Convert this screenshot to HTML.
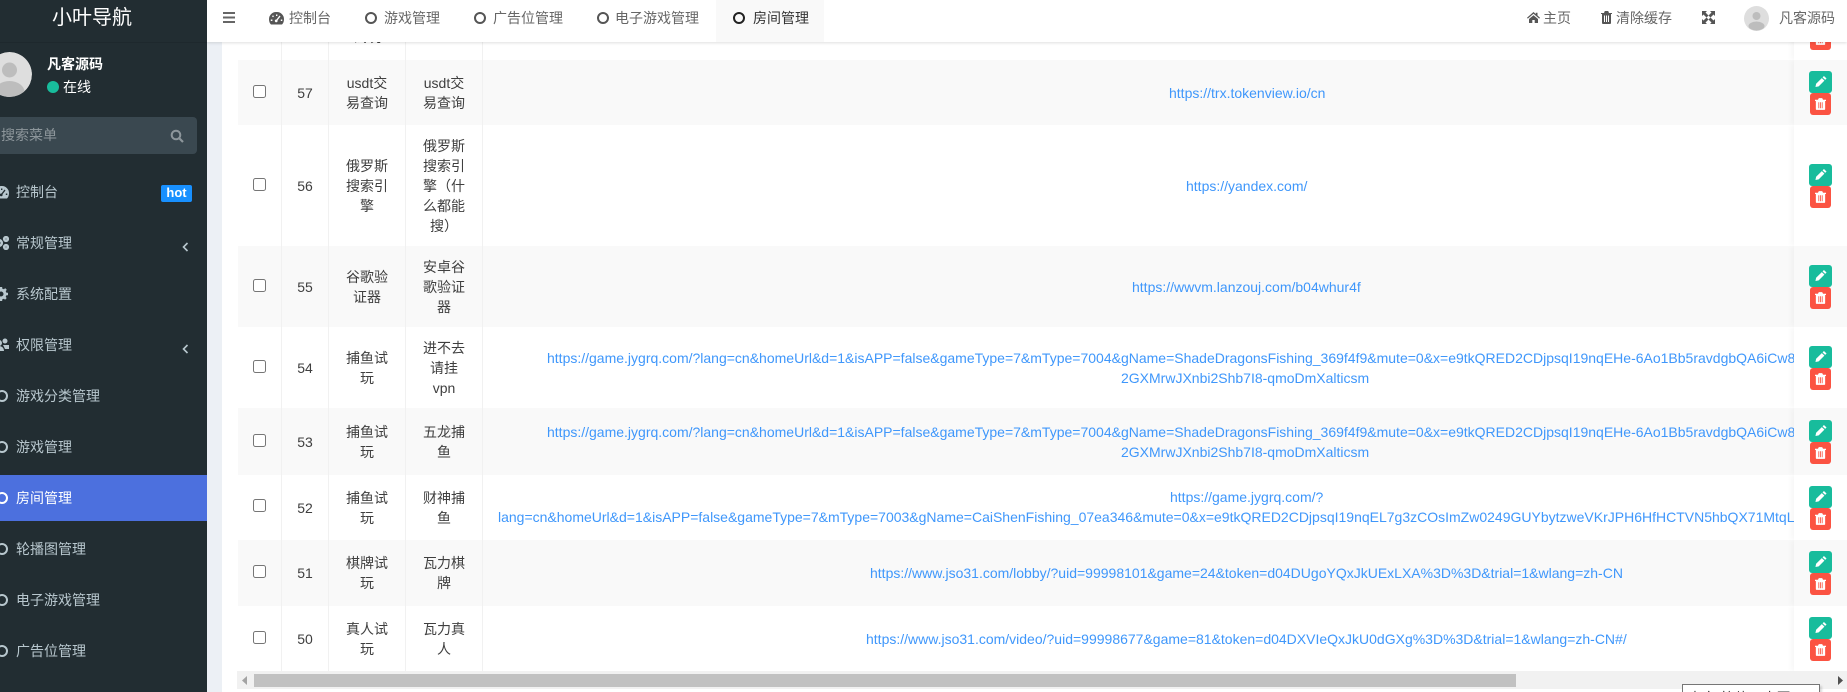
<!DOCTYPE html>
<html lang="zh-CN"><head><meta charset="utf-8"><title>房间管理</title>
<style>
*{box-sizing:border-box}
html,body{margin:0;padding:0;width:1847px;height:692px;overflow:hidden;background:#fff}
body{position:relative;font:14px/20px "Liberation Sans","Noto Sans CJK SC",sans-serif;color:#444}
.abs,.side,.side *,.hd,.hd *{position:absolute}
.side{left:0;top:0;width:207px;height:692px;background:#222d32;overflow:hidden;z-index:5;color:#b8c7ce}
.t{white-space:nowrap;line-height:20px}
.m{left:16px}
.ring{width:12px;height:12px;border:2.4px solid #b8c7ce;border-radius:50%;left:-4px}
.gut{position:absolute;left:207px;top:0;width:15px;height:692px;background:#ecf0f5}
.hd{left:207px;top:0;width:1640px;height:42px;background:#fff;box-shadow:0 1px 3px rgba(0,0,0,.13);z-index:4;color:#666}
.hr{width:12px;height:12px;border:2.4px solid #555;border-radius:50%;top:11.5px}
.row{position:absolute;left:238px;width:1609px;border-bottom:1px solid #f1f1f1;background:#fff;overflow:hidden}
.s{background:#f9f9f9}
.c{position:absolute;top:0;bottom:0;display:flex;align-items:center;justify-content:center;text-align:center;border-right:1px solid #f1f1f1;color:#3f3f3f}
.c1{left:0;width:44px}.c2{left:44px;width:47px}.c3{left:91px;width:77px}.c4{left:168px;width:77px}
.c1 input{position:absolute;left:15px;margin:0;width:13px;height:13px}
.u{position:absolute;left:244px;width:1312px;top:0;bottom:0;overflow:hidden;display:flex;align-items:center;color:#3f97fb}
.u div{position:absolute;white-space:nowrap}
.b{position:absolute;left:1556px;width:53px;top:0;bottom:0;box-shadow:-3px 0 5px rgba(0,0,0,.035);display:flex;flex-direction:column;justify-content:center}
.g,.r{height:22px;border-radius:3px;position:relative;flex:none}
.g{width:23px;margin-left:15px;background:#18bc9c}
.r{width:21px;margin-left:16px;background:#fb5342}
.g svg{position:absolute;left:6px;top:4px;width:12px;height:13px}
.r svg{position:absolute;left:5px;top:5px;width:11px;height:12px}
</style></head><body>
<div class="gut"></div>

<!-- table rows -->
<div class="row" style="top:0;height:61px"><div class="c c1"></div><div class="c c2"></div><div class="c c3"><div style="position:absolute;top:27px;left:0;width:100%">试玩</div></div><div class="c c4"></div><div class="b" style="justify-content:flex-start"><div class="r" style="margin-top:28px"><svg viewBox="0 0 13 14"><path fill="#fff" fill-rule="evenodd" d="M4.500 0h4l1 2H13v1.400h-1V13a1 1 0 0 1-1 1H2a1 1 0 0 1-1-1V3.400H0V2h3.500zM4 5v7h1V5zM6 5v7h1V5zM8 5v7h1V5z"/></svg></div></div></div>

<div class="row s" style="top:60px;height:66px"><div class="c c1"><input type="checkbox" style="top:25px"></div><div class="c c2">57</div><div class="c c3">usdt交<br>易查询</div><div class="c c4">usdt交<br>易查询</div><div class="u"><div style="left:687px">https://trx.tokenview.io/cn</div></div><div class="b"><div class="g"><svg viewBox="0 0 13 14"><path fill="#fff" d="M9.700 1l2.800 2.800-1.500 1.500L8.200 2.500zM7.400 3.300l2.800 2.800L4 12.300 0.500 13l.7-3.500z"/></svg></div><div class="r"><svg viewBox="0 0 13 14"><path fill="#fff" fill-rule="evenodd" d="M4.500 0h4l1 2H13v1.400h-1V13a1 1 0 0 1-1 1H2a1 1 0 0 1-1-1V3.400H0V2h3.500zM4 5v7h1V5zM6 5v7h1V5zM8 5v7h1V5z"/></svg></div></div></div>

<div class="row" style="top:125px;height:122px"><div class="c c1"><input type="checkbox" style="top:53px"></div><div class="c c2">56</div><div class="c c3">俄罗斯<br>搜索引<br>擎</div><div class="c c4">俄罗斯<br>搜索引<br>擎（什<br>么都能<br>搜）</div><div class="u"><div style="left:704px">https://yandex.com/</div></div><div class="b"><div class="g"><svg viewBox="0 0 13 14"><path fill="#fff" d="M9.700 1l2.800 2.800-1.500 1.500L8.200 2.500zM7.400 3.300l2.800 2.800L4 12.300 0.500 13l.7-3.500z"/></svg></div><div class="r"><svg viewBox="0 0 13 14"><path fill="#fff" fill-rule="evenodd" d="M4.500 0h4l1 2H13v1.400h-1V13a1 1 0 0 1-1 1H2a1 1 0 0 1-1-1V3.400H0V2h3.500zM4 5v7h1V5zM6 5v7h1V5zM8 5v7h1V5z"/></svg></div></div></div>

<div class="row s" style="top:246px;height:82px"><div class="c c1"><input type="checkbox" style="top:33px"></div><div class="c c2">55</div><div class="c c3">谷歌验<br>证器</div><div class="c c4">安卓谷<br>歌验证<br>器</div><div class="u"><div style="left:650px">https://wwvm.lanzouj.com/b04whur4f</div></div><div class="b"><div class="g"><svg viewBox="0 0 13 14"><path fill="#fff" d="M9.700 1l2.800 2.800-1.500 1.500L8.200 2.500zM7.400 3.300l2.800 2.800L4 12.300 0.500 13l.7-3.500z"/></svg></div><div class="r"><svg viewBox="0 0 13 14"><path fill="#fff" fill-rule="evenodd" d="M4.500 0h4l1 2H13v1.400h-1V13a1 1 0 0 1-1 1H2a1 1 0 0 1-1-1V3.400H0V2h3.500zM4 5v7h1V5zM6 5v7h1V5zM8 5v7h1V5z"/></svg></div></div></div>

<div class="row" style="top:327px;height:82px"><div class="c c1"><input type="checkbox" style="top:33px"></div><div class="c c2">54</div><div class="c c3">捕鱼试<br>玩</div><div class="c c4">进不去<br>请挂<br>vpn</div><div class="u"><div style="left:65px;top:21px">https://game.jygrq.com/?lang=cn&amp;homeUrl&amp;d=1&amp;isAPP=false&amp;gameType=7&amp;mType=7004&amp;gName=ShadeDragonsFishing_369f4f9&amp;mute=0&amp;x=e9tkQRED2CDjpsqI19nqEHe-6Ao1Bb5ravdgbQA6iCw8kT1xYqPz0Lm3Rt7bVn</div><div style="left:639px;top:41px">2GXMrwJXnbi2Shb7I8-qmoDmXalticsm</div></div><div class="b"><div class="g"><svg viewBox="0 0 13 14"><path fill="#fff" d="M9.700 1l2.800 2.800-1.500 1.500L8.200 2.500zM7.400 3.300l2.800 2.800L4 12.300 0.500 13l.7-3.500z"/></svg></div><div class="r"><svg viewBox="0 0 13 14"><path fill="#fff" fill-rule="evenodd" d="M4.500 0h4l1 2H13v1.400h-1V13a1 1 0 0 1-1 1H2a1 1 0 0 1-1-1V3.400H0V2h3.500zM4 5v7h1V5zM6 5v7h1V5zM8 5v7h1V5z"/></svg></div></div></div>

<div class="row s" style="top:408px;height:68px"><div class="c c1"><input type="checkbox" style="top:26px"></div><div class="c c2">53</div><div class="c c3">捕鱼试<br>玩</div><div class="c c4">五龙捕<br>鱼</div><div class="u"><div style="left:65px;top:14px">https://game.jygrq.com/?lang=cn&amp;homeUrl&amp;d=1&amp;isAPP=false&amp;gameType=7&amp;mType=7004&amp;gName=ShadeDragonsFishing_369f4f9&amp;mute=0&amp;x=e9tkQRED2CDjpsqI19nqEHe-6Ao1Bb5ravdgbQA6iCw8kT1xYqPz0Lm3Rt7bVn</div><div style="left:639px;top:34px">2GXMrwJXnbi2Shb7I8-qmoDmXalticsm</div></div><div class="b"><div class="g"><svg viewBox="0 0 13 14"><path fill="#fff" d="M9.700 1l2.800 2.800-1.500 1.500L8.200 2.500zM7.400 3.300l2.800 2.800L4 12.300 0.500 13l.7-3.500z"/></svg></div><div class="r"><svg viewBox="0 0 13 14"><path fill="#fff" fill-rule="evenodd" d="M4.500 0h4l1 2H13v1.400h-1V13a1 1 0 0 1-1 1H2a1 1 0 0 1-1-1V3.400H0V2h3.500zM4 5v7h1V5zM6 5v7h1V5zM8 5v7h1V5z"/></svg></div></div></div>

<div class="row" style="top:475px;height:66px"><div class="c c1"><input type="checkbox" style="top:24px"></div><div class="c c2">52</div><div class="c c3">捕鱼试<br>玩</div><div class="c c4">财神捕<br>鱼</div><div class="u"><div style="left:688px;top:12px">https://game.jygrq.com/?</div><div style="left:16px;top:32px">lang=cn&amp;homeUrl&amp;d=1&amp;isAPP=false&amp;gameType=7&amp;mType=7003&amp;gName=CaiShenFishing_07ea346&amp;mute=0&amp;x=e9tkQRED2CDjpsqI19nqEL7g3zCOsImZw0249GUYbytzweVKrJPH6HfHCTVN5hbQX71MtqLa8Xw2Pq</div></div><div class="b"><div class="g"><svg viewBox="0 0 13 14"><path fill="#fff" d="M9.700 1l2.800 2.800-1.500 1.500L8.200 2.500zM7.400 3.300l2.800 2.800L4 12.300 0.500 13l.7-3.500z"/></svg></div><div class="r"><svg viewBox="0 0 13 14"><path fill="#fff" fill-rule="evenodd" d="M4.500 0h4l1 2H13v1.400h-1V13a1 1 0 0 1-1 1H2a1 1 0 0 1-1-1V3.400H0V2h3.500zM4 5v7h1V5zM6 5v7h1V5zM8 5v7h1V5z"/></svg></div></div></div>

<div class="row s" style="top:540px;height:67px"><div class="c c1"><input type="checkbox" style="top:25px"></div><div class="c c2">51</div><div class="c c3">棋牌试<br>玩</div><div class="c c4">瓦力棋<br>牌</div><div class="u"><div style="left:388px">https://www.jso31.com/lobby/?uid=99998101&amp;game=24&amp;token=d04DUgoYQxJkUExLXA%3D%3D&amp;trial=1&amp;wlang=zh-CN</div></div><div class="b"><div class="g"><svg viewBox="0 0 13 14"><path fill="#fff" d="M9.700 1l2.800 2.800-1.500 1.500L8.200 2.500zM7.400 3.300l2.800 2.800L4 12.300 0.500 13l.7-3.500z"/></svg></div><div class="r"><svg viewBox="0 0 13 14"><path fill="#fff" fill-rule="evenodd" d="M4.500 0h4l1 2H13v1.400h-1V13a1 1 0 0 1-1 1H2a1 1 0 0 1-1-1V3.400H0V2h3.500zM4 5v7h1V5zM6 5v7h1V5zM8 5v7h1V5z"/></svg></div></div></div>

<div class="row" style="top:606px;height:65px;border-bottom:0"><div class="c c1"><input type="checkbox" style="top:25px"></div><div class="c c2">50</div><div class="c c3">真人试<br>玩</div><div class="c c4">瓦力真<br>人</div><div class="u"><div style="left:384px">https://www.jso31.com/video/?uid=99998677&amp;game=81&amp;token=d04DXVIeQxJkU0dGXg%3D%3D&amp;trial=1&amp;wlang=zh-CN#/</div></div><div class="b"><div class="g"><svg viewBox="0 0 13 14"><path fill="#fff" d="M9.700 1l2.800 2.800-1.500 1.500L8.200 2.500zM7.400 3.300l2.800 2.800L4 12.300 0.500 13l.7-3.500z"/></svg></div><div class="r"><svg viewBox="0 0 13 14"><path fill="#fff" fill-rule="evenodd" d="M4.500 0h4l1 2H13v1.400h-1V13a1 1 0 0 1-1 1H2a1 1 0 0 1-1-1V3.400H0V2h3.500zM4 5v7h1V5zM6 5v7h1V5zM8 5v7h1V5z"/></svg></div></div></div>

<!-- scrollbar -->
<div class="abs" style="left:237px;top:671px;width:1610px;height:18px;background:#f1f1f1"></div>
<div class="abs" style="left:254px;top:674px;width:1262px;height:13px;background:#c1c1c1"></div>
<svg class="abs" style="left:241px;top:675px" width="8" height="11"><path d="M6 1v9L1 5.500z" fill="#a3a3a3"/></svg>
<svg class="abs" style="left:1836px;top:675px" width="8" height="11"><path d="M2 1v9l5-4.500z" fill="#505050"/></svg>

<!-- language box -->
<div class="abs" style="left:1682px;top:684px;width:138px;height:30px;background:#fff;border:1px solid #767676;box-shadow:2px 2px 2px rgba(0,0,0,.15);padding:3px 5px;white-space:nowrap;color:#333;overflow:hidden">中文(简体，中国)</div>

<!-- header -->
<div class="hd">
<svg style="left:16px;top:12px" width="12" height="11" viewBox="0 0 12 11"><path fill="#666" d="M0 0h12v2H0zM0 4.500h12v2H0zM0 9h12v2H0z"/></svg>
<svg style="left:62px;top:12px" width="15" height="13" viewBox="0 0 15 13"><path fill="#555" fill-rule="evenodd" d="M7.500 0A7.200 7.200 0 0 0 0 7.200c0 2.100.7 4 2 5.300h11c1.300-1.300 2-3.200 2-5.300A7.200 7.200 0 0 0 7.500 0zM7 2.500h1.400V4H7zM3 4.200l1-1 1 1-1 1zM1.800 7.500h1.600V9H1.800zM11.800 7.500h1.500V9h-1.500zM10.500 3.500l1 1-3 3.800a1.400 1.400 0 1 1-1-.8z"/></svg>
<div class="t" style="left:82px;top:8px">控制台</div>
<div class="hr" style="left:158px"></div><div class="t" style="left:177px;top:8px">游戏管理</div>
<div class="hr" style="left:267px"></div><div class="t" style="left:286px;top:8px">广告位管理</div>
<div class="hr" style="left:390px"></div><div class="t" style="left:408px;top:8px">电子游戏管理</div>
<div style="left:509px;top:0;width:108px;height:42px;background:#f9f9f9"></div>
<div class="hr" style="left:526px;border-color:#222"></div><div class="t" style="left:546px;top:8px;color:#333">房间管理</div>

<svg style="left:1320px;top:12px" width="13" height="11" viewBox="0 0 13 11"><path fill="#555" d="M6.500 0l2.300 2V.8h1.700v2.700L13 5.700l-.8.900-5.700-4.900L.8 6.600 0 5.700zM2 7l4.500-3.800L11 7v4H7.700V8H5.300v3H2z"/></svg>
<div class="t" style="left:1336px;top:8px">主页</div>
<svg style="left:1394px;top:11px" width="11" height="13" viewBox="0 0 11 13"><path fill="#555" fill-rule="evenodd" d="M3.800 0h3.400l.8 2H11v1h-1v9a1 1 0 0 1-1 1H2a1 1 0 0 1-1-1V3H0V2h3zM3 4.500V11h1V4.500zM5 4.500V11h1V4.500zM7 4.500V11h1V4.500z"/></svg>
<div class="t" style="left:1409px;top:8px">清除缓存</div>
<svg style="left:1495px;top:11px" width="13" height="13" viewBox="0 0 13 13"><path fill="#555" d="M0 0h5L3.500 1.500 6.500 4.500 4.500 6.500 1.500 3.500 0 5zM13 0v5l-1.500-1.500-3 3-2-2 3-3L8 0zM0 13V8l1.500 1.500 3-3 2 2-3 3L5 13zM13 13H8l1.500-1.500-3-3 2-2 3 3L13 8z"/></svg>
<svg style="left:1537px;top:6px" width="25" height="25" viewBox="0 0 25 25"><circle cx="12.500" cy="12.500" r="12.500" fill="#dedede"/><circle cx="12.500" cy="10" r="4" fill="#bdbdbd"/><ellipse cx="12.500" cy="20" rx="8" ry="4.500" fill="#bdbdbd"/></svg>
<div class="t" style="left:1572px;top:8px">凡客源码</div>
</div>

<!-- sidebar -->
<div class="side">
<div style="left:0;top:42px;width:207px;height:1px;background:#1e282d"></div>
<div class="t" style="left:52px;top:6px;font-size:20px;line-height:24px;color:#fff">小叶导航</div>
<svg style="left:-13px;top:52px" width="45" height="45" viewBox="0 0 45 45"><defs><clipPath id="a"><circle cx="22.500" cy="22.500" r="22.500"/></clipPath></defs><g clip-path="url(#a)"><circle cx="22.500" cy="22.500" r="22.500" fill="#dedede"/><circle cx="22.500" cy="18" r="7.500" fill="#bdbdbd"/><ellipse cx="22.500" cy="40" rx="15" ry="11" fill="#bdbdbd"/></g></svg>
<div class="t" style="left:47px;top:54px;color:#fff;font-weight:bold">凡客源码</div>
<div style="left:47px;top:81px;width:12px;height:12px;border-radius:50%;background:#18bc9c"></div>
<div class="t" style="left:63px;top:77px;color:#fff">在线</div>
<div style="left:-10px;top:117px;width:207px;height:37px;background:#3a4850;border-radius:4px"></div>
<div class="t" style="left:1px;top:125px;color:#8d969b">搜索菜单</div>
<svg style="left:170px;top:129px" width="14" height="14" viewBox="0 0 14 14"><circle cx="6" cy="6" r="4.300" fill="none" stroke="#8d969b" stroke-width="2"/><path d="M9 9l4 4" stroke="#8d969b" stroke-width="2.200"/></svg>

<svg style="left:-6px;top:186px" width="15" height="13" viewBox="0 0 15 13"><path fill="#b8c7ce" fill-rule="evenodd" d="M7.500 0A7.200 7.200 0 0 0 0 7.200c0 2.100.7 4 2 5.300h11c1.300-1.300 2-3.200 2-5.300A7.200 7.200 0 0 0 7.500 0zM7 2.500h1.400V4H7zM3 4.200l1-1 1 1-1 1zM11.800 7.500h1.500V9h-1.500zM10.500 3.500l1 1-3 3.800a1.400 1.400 0 1 1-1-.8z"/></svg>
<div class="t m" style="top:182px">控制台</div>
<div style="left:161px;top:185px;width:31px;height:17px;border-radius:2px;background:#1890ff;color:#fff;font-weight:bold;font-size:13px;line-height:16px;text-align:center">hot</div>

<svg style="left:-6px;top:236px" width="15" height="14" viewBox="0 0 15 14"><g fill="none" stroke="#b8c7ce" stroke-width="2.600"><circle cx="5" cy="7" r="2.800"/><circle cx="12" cy="3" r="1.800"/><circle cx="12" cy="11" r="1.800"/></g></svg>
<div class="t m" style="top:233px">常规管理</div>
<svg style="left:182px;top:242px" width="7" height="10" viewBox="0 0 7 10"><path d="M5.500 1L1.500 5l4 4" fill="none" stroke="#b8c7ce" stroke-width="1.600"/></svg>

<svg style="left:-6px;top:287px" width="15" height="14" viewBox="0 0 15 14"><circle cx="7" cy="7" r="4" fill="none" stroke="#b8c7ce" stroke-width="3"/><path stroke="#b8c7ce" stroke-width="2.400" d="M7 0v14M0 7h14M2 2l10 10M12 2L2 12" stroke-dasharray="2.500 9"/></svg>
<div class="t m" style="top:284px">系统配置</div>

<svg style="left:-6px;top:338px" width="15" height="14" viewBox="0 0 15 14"><circle cx="5" cy="5" r="3" fill="#b8c7ce"/><circle cx="11" cy="3" r="2.500" fill="#b8c7ce"/><path fill="#b8c7ce" d="M0 13c0-3 2-5 5-5s5 2 5 5zM9 7h6v4h-4z"/></svg>
<div class="t m" style="top:335px">权限管理</div>
<svg style="left:182px;top:344px" width="7" height="10" viewBox="0 0 7 10"><path d="M5.500 1L1.500 5l4 4" fill="none" stroke="#b8c7ce" stroke-width="1.600"/></svg>

<div class="ring" style="top:390px"></div><div class="t m" style="top:386px">游戏分类管理</div>
<div class="ring" style="top:441px"></div><div class="t m" style="top:437px">游戏管理</div>
<div style="left:0;top:475px;width:207px;height:46px;background:#4c70de"></div>
<div class="ring" style="top:492px;border-color:#fff"></div><div class="t m" style="top:488px;color:#fff">房间管理</div>
<div class="ring" style="top:543px"></div><div class="t m" style="top:539px">轮播图管理</div>
<div class="ring" style="top:594px"></div><div class="t m" style="top:590px">电子游戏管理</div>
<div class="ring" style="top:645px"></div><div class="t m" style="top:641px">广告位管理</div>
</div>
</body></html>
